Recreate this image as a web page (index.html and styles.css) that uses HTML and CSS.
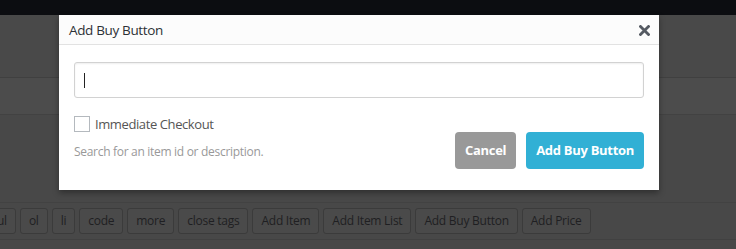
FILE: index.html
```html
<!DOCTYPE html>
<html>
<head>
    <meta charset="utf-8">
    <title>Add Buy Button</title>
    <link rel="stylesheet" href="styles.css">
</head>
<body>

<div class="page">
    <div class="admin_bar"></div>
    <div class="page_head"></div>
    <div class="page_tabs"></div>
    <div class="page_body"></div>
    <div class="quicktags">
        <span class="qt_btn">ul</span>
        <span class="qt_btn">ol</span>
        <span class="qt_btn">li</span>
        <span class="qt_btn">code</span>
        <span class="qt_btn">more</span>
        <span class="qt_btn">close tags</span>
        <span class="qt_btn">Add Item</span>
        <span class="qt_btn">Add Item List</span>
        <span class="qt_btn">Add Buy Button</span>
        <span class="qt_btn">Add Price</span>
    </div>
    <div class="page_foot"></div>
</div>

<div class="modal">
    <div class="modal_head">
        <span class="modal_title">Add Buy Button</span>
        <span class="modal_close">
            <svg width="11" height="11" viewBox="0 0 11 11"><path d="M1.5 1.5 L9.5 9.5 M9.5 1.5 L1.5 9.5" stroke="#555a62" stroke-width="2.8" stroke-linecap="square"/></svg>
        </span>
    </div>
    <div class="modal_body">
        <div class="search_input"><span class="caret"></span></div>
        <div class="modal_row">
            <div class="options">
                <label class="check_line"><span class="check_box"></span>Immediate Checkout</label>
                <div class="hint">Search for an item id or description.</div>
            </div>
            <div class="actions">
                <span class="btn btn_cancel">Cancel</span>
                <span class="btn btn_info">Add Buy Button</span>
            </div>
        </div>
    </div>
</div>

</body>
</html>
```

FILE: styles.css
```css
html, body{
    margin:0;
    padding:0;
}
body{
    width:736px;
    height:249px;
    overflow:hidden;
    position:relative;
    background:#484848;
    font-family:"Segoe UI","Open Sans","Noto Sans",sans-serif;
    font-size:13px;
}
.admin_bar{
    height:15px;
    background:#0c0d11;
}
.page_head{
    height:62px;
    background:#494949;
    border-bottom:1px solid #404040;
}
.page_tabs{
    height:36px;
    background:#4c4c4c;
    border-bottom:1px solid #424242;
}
.page_body{
    height:87px;
    background:#484848;
    border-bottom:1px solid #424242;
}
.quicktags{
    height:36px;
    display:flex;
    align-items:center;
    gap:4px;
    margin-left:-12px;
    border-bottom:1px solid #414141;
    background:#484848;
}
.qt_btn{
    height:24px;
    line-height:23px;
    padding:0 8px;
    border:1px solid #3b3b3b;
    border-radius:3px;
    background:#4a4a4a;
    color:#1f1f22;
    font-size:12px;
    letter-spacing:-0.25px;
}
.page_foot{
    height:10px;
    background:#484848;
}

/* modal */
.modal{
    position:absolute;
    left:59px;
    top:15px;
    width:600px;
    height:175px;
    background:#fff;
    box-shadow:0 3px 6px rgba(0,0,0,0.35);
}
.modal_head{
    height:29px;
    background:#fcfcfc;
    border-bottom:1px solid #e2e2e2;
    display:flex;
    align-items:center;
    justify-content:space-between;
    padding:0 9px 0 10px;
}
.modal_title{
    font-size:13.5px;
    letter-spacing:-0.35px;
    color:#2c3136;
}
.modal_close{
    display:flex;
    padding-top:1px;
}
.modal_body{
    padding:17px 15px 0 15px;
}
.search_input{
    height:34px;
    border:1px solid #d2d2d2;
    border-radius:3px;
    box-shadow:inset 0 1px 2px rgba(0,0,0,0.07);
    display:flex;
    align-items:center;
    padding-left:9px;
}
.caret{
    width:1px;
    height:15px;
    background:#222;
}
.modal_row{
    display:flex;
    justify-content:space-between;
    margin-top:18px;
}
.check_line{
    display:flex;
    align-items:center;
    color:#555;
    font-size:13px;
    letter-spacing:-0.4px;
    height:15px;
}
.check_box{
    width:14px;
    height:14px;
    border:1px solid #b4b9be;
    margin-right:5px;
    background:#fff;
}
.hint{
    margin-top:12px;
    color:#999;
    font-size:12px;
    letter-spacing:-0.3px;
}
.actions{
    display:flex;
    gap:10px;
    padding-top:16px;
}
.btn{
    height:37px;
    line-height:37px;
    border-radius:4px;
    color:#fff;
    font-weight:bold;
    font-size:13px;
    letter-spacing:-0.3px;
    padding:0 10px;
}
.btn_cancel{
    background:#999;
}
.btn_info{
    background:#31b0d5;
}
```
